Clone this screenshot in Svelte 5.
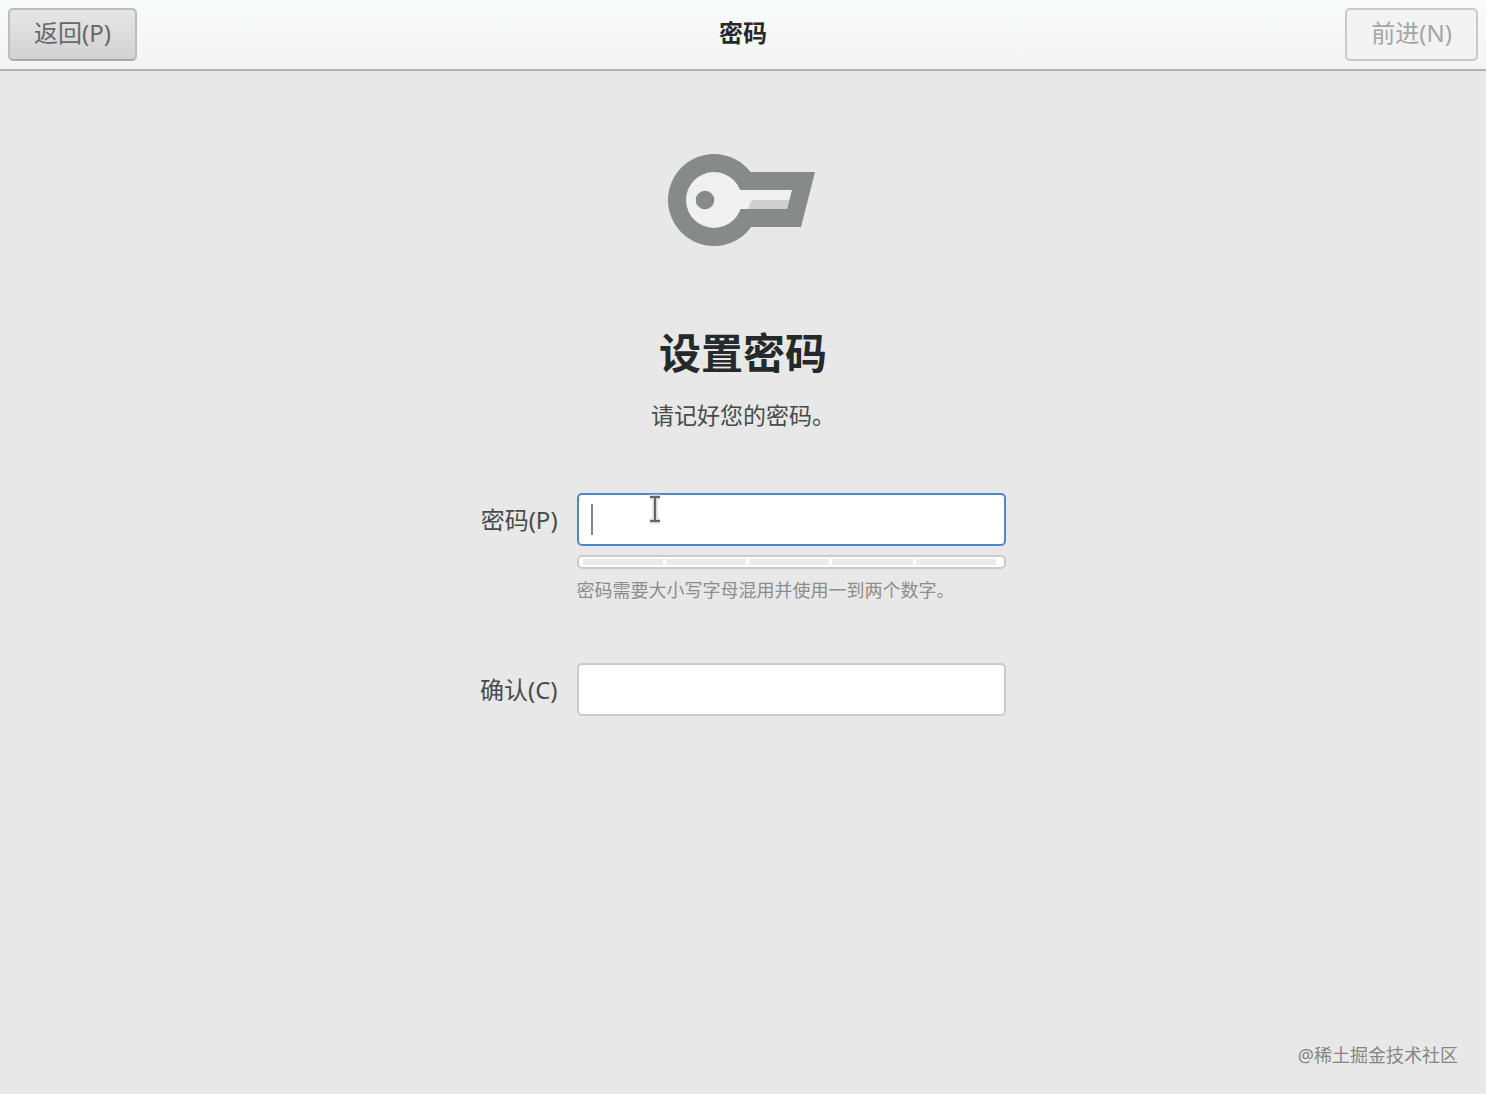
<script lang="ts">
  let password = $state('');
  let confirmation = $state('');
  const segments = [1, 2, 3, 4, 5];
</script>

<div class="window">
  <header>
    <button class="back" type="button">返回(P)</button>
    <h2>密码</h2>
    <button class="next" type="button" disabled>前进(N)</button>
  </header>

  <main>
    <svg class="key" viewBox="0 0 150 94" aria-hidden="true">
      <circle cx="46" cy="47" r="46" fill="#868a88" />
      <path fill="#868a88" d="M60 19H147L133 74H60Z" />
      <circle cx="46" cy="47" r="28" fill="#f0f0f0" />
      <path fill="#f0f0f0" d="M60 37H124L119 56H60Z" />
      <path fill="#cecfce" d="M85 47H121L119 56H81Q81 49 85 47Z" />
      <circle cx="37" cy="47" r="9.3" fill="#868a88" />
    </svg>

    <h1>设置密码</h1>
    <p class="subtitle">请记好您的密码。</p>

    <form>
      <label for="password">密码(P)</label>
      <div class="entry">
        <input id="password" class="active" type="password" aria-describedby="hint" bind:value={password} />
        <span class="caret"></span>
        <svg class="pointer" viewBox="0 0 14 30" aria-hidden="true">
          <path d="M2 3H6L7 4L8 3H12M7 4V26M2 27H6L7 26L8 27H12" fill="none" stroke="#d6d6d6" stroke-width="5" />
          <path d="M2 3H6L7 4L8 3H12M7 4V26M2 27H6L7 26L8 27H12" fill="none" stroke="#666" stroke-width="2" />
        </svg>
      </div>

      <div class="strength">
        {#each segments as segment (segment)}
          <span></span>
        {/each}
      </div>
      <p class="hint" id="hint">密码需要大小写字母混用并使用一到两个数字。</p>

      <label for="confirm">确认(C)</label>
      <div class="entry">
        <input id="confirm" type="password" bind:value={confirmation} />
      </div>
    </form>
  </main>

  <footer>@稀土掘金技术社区</footer>
</div>

<style>
  :global(body) {
    margin: 0;
    background: #e8e8e8;
  }

  .window {
    box-sizing: border-box;
    min-height: 100vh;
    display: flex;
    flex-direction: column;
    background: #e8e8e8;
    color: #484b4c;
    font-family: 'Noto Sans', 'Noto Sans CJK SC', sans-serif;
    font-size: 24px;
    line-height: 32px;
  }

  header {
    box-sizing: border-box;
    height: 71px;
    padding: 8px 8px 9px;
    display: grid;
    grid-template-columns: 1fr auto 1fr;
    align-items: start;
    background: linear-gradient(#f9fafa, #f4f4f4);
    border-bottom: 2px solid #b3b3b3;
  }

  h1,
  h2,
  p {
    margin: 0;
  }

  h2 {
    font-size: 24px;
    line-height: 50px;
    color: #25282a;
  }

  button {
    box-sizing: border-box;
    height: 53px;
    padding: 0 24px 3px;
    border: 2px solid #bdbdbd;
    border-radius: 5px;
    font: inherit;
  }

  .back {
    justify-self: start;
    color: #66686a;
    background: linear-gradient(#e6e6e6, #d2d2d2);
    border-bottom-color: #a9a9a9;
  }

  .next {
    justify-self: end;
    color: #a4a6a6;
    background: #f3f3f3;
    border-color: #c9c9c9;
  }

  main {
    flex: 1;
    display: flex;
    flex-direction: column;
    align-items: center;
    padding: 82px 16px 0;
  }

  .key {
    width: 150px;
    height: 94px;
  }

  h1 {
    margin-top: 76px;
    font-size: 42px;
    line-height: 60px;
    color: #25292b;
  }

  .subtitle {
    margin-top: 16px;
    font-size: 23px;
  }

  form {
    box-sizing: border-box;
    width: 100%;
    max-width: 526px;
    margin-top: 62px;
    display: grid;
    grid-template-columns: auto 1fr;
    column-gap: 19px;
    align-items: center;
  }

  label {
    text-align: right;
  }

  .entry {
    position: relative;
  }

  input {
    box-sizing: border-box;
    display: block;
    width: 100%;
    height: 53px;
    padding: 0 12px;
    border: 2px solid #cacaca;
    border-radius: 5px;
    background: #fff;
    font: inherit;
    outline: none;
  }

  .active {
    border-color: #4c88ca;
  }

  .caret {
    position: absolute;
    left: 14px;
    top: 11px;
    width: 2px;
    height: 31px;
    background: #868686;
  }

  .pointer {
    position: absolute;
    left: 71px;
    top: 1px;
    width: 14px;
    height: 30px;
  }

  .strength {
    grid-column: 2;
    box-sizing: border-box;
    height: 14px;
    margin-top: 9px;
    padding: 2px 8px 2px 4px;
    display: flex;
    gap: 3px;
    border: 2px solid #cbcbcb;
    border-radius: 5px;
    background: #fff;
  }

  .strength span {
    flex: 1;
    background: #ebebeb;
  }

  .hint {
    grid-column: 2;
    margin: 8px 0 60px;
    font-size: 18px;
    line-height: 26px;
    color: #8b8d8d;
    white-space: nowrap;
  }

  footer {
    align-self: flex-end;
    padding: 0 28px 26px;
    font-size: 18px;
    line-height: 26px;
    color: #858585;
  }
</style>
